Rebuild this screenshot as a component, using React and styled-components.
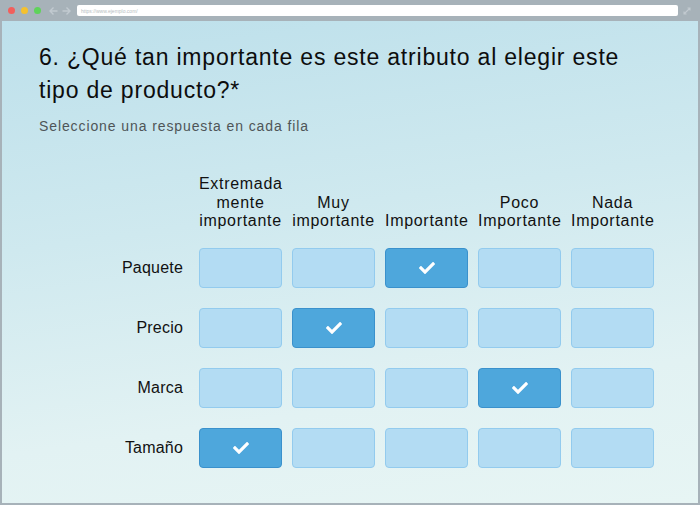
import React from "react";
import styled, { createGlobalStyle } from "styled-components";
import { FaCheck } from "react-icons/fa";

const Global = createGlobalStyle`
  html, body { margin: 0; padding: 0; }
  body { width: 700px; height: 505px; overflow: hidden; font-family: "Liberation Sans", Arial, sans-serif; }
`;

const Frame = styled.div`
  width: 700px;
  height: 505px;
  box-sizing: border-box;
  background: #a7b2b9;
  padding: 0 2px 2px 2px;
  display: flex;
  flex-direction: column;
`;

const Toolbar = styled.div`
  height: 21px;
  display: flex;
  align-items: center;
  padding: 0 0 0 6px;
  flex-shrink: 0;
`;

const Dot = styled.span`
  width: 7px;
  height: 7px;
  border-radius: 50%;
  background: ${(p) => p.$c};
  margin-right: 6px;
`;

const Arrow = styled.span`
  width: 13px;
  display: flex;
  justify-content: center;
  color: #c2cad0;
  svg { display: block; }
`;

const Url = styled.div`
  margin-left: 4px;
  width: 601px;
  height: 11px;
  background: #fff;
  border-radius: 2px;
  font-size: 5px;
  color: #b8bec2;
  display: flex;
  align-items: center;
  padding-left: 4px;
  box-sizing: border-box;
`;

const Expand = styled.span`
  margin-left: 5px;
  color: #c2cad0;
  display: flex;
`;

const Page = styled.div`
  flex: 1;
  background: linear-gradient(172deg, #bde0eb 0%, #cfe9ef 40%, #e2f2f3 75%, #e7f5f4 100%);
  padding: 20px 37px 0 37px;
  box-sizing: border-box;
`;

const Title = styled.h1`
  margin: 0;
  max-width: 610px;
  font-size: 23px;
  line-height: 33px;
  letter-spacing: 0.8px;
  font-weight: normal;
  color: #0d0d0d;
`;

const Subtitle = styled.p`
  margin: 10px 0 0 0;
  font-size: 14px;
  line-height: 18px;
  letter-spacing: 0.9px;
  color: #4f5558;
`;

const Matrix = styled.div`
  margin-top: 40px;
  display: grid;
  grid-template-columns: 150px repeat(5, 83px);
  column-gap: 10px;
  row-gap: 20px;
`;

const Head = styled.div`
  font-size: 16px;
  line-height: 18.5px;
  letter-spacing: 0.7px;
  color: #111;
  text-align: center;
  align-self: end;
  white-space: nowrap;
  margin-bottom: -2.5px;
`;

const Label = styled.div`
  font-size: 16px;
  letter-spacing: 0.2px;
  color: #111;
  text-align: right;
  padding-right: 6px;
  align-self: center;
`;

const Cell = styled.div`
  height: 40px;
  box-sizing: border-box;
  border-radius: 4px;
  border: 1px solid ${(p) => (p.$on ? "#3a91cc" : "#93cbee")};
  background: ${(p) => (p.$on ? "#4ea7dc" : "#b3dcf3")};
  display: flex;
  align-items: center;
  justify-content: center;
  color: #fff;
`;

const heads = [
  ["Extremada", "mente", "importante"],
  ["Muy", "importante"],
  ["Importante"],
  ["Poco", "Importante"],
  ["Nada", "Importante"],
];

const rows = [
  ["Paquete", 2],
  ["Precio", 1],
  ["Marca", 3],
  ["Tamaño", 0],
];

export default function App() {
  return (
    <>
      <Global />
      <Frame>
        <Toolbar>
          <Dot $c="#f25f5c" />
          <Dot $c="#f5c12e" />
          <Dot $c="#5fd35a" />
          <Arrow>
            <svg width="9" height="8" viewBox="0 0 9 8"><path d="M4.5 0.5 L1 4 L4.5 7.5 M1 4 H8.5" fill="none" stroke="currentColor" strokeWidth="1.4" /></svg>
          </Arrow>
          <Arrow>
            <svg width="9" height="8" viewBox="0 0 9 8"><path d="M4.5 0.5 L8 4 L4.5 7.5 M8 4 H0.5" fill="none" stroke="currentColor" strokeWidth="1.4" /></svg>
          </Arrow>
          <Url>https://www.ejemplo.com/</Url>
          <Expand>
            <svg width="8" height="8" viewBox="0 0 8 8"><path d="M1 7 L7 1 M4.5 1 H7 V3.5 M1 4.5 V7 H3.5" fill="none" stroke="currentColor" strokeWidth="1.1" /></svg>
          </Expand>
        </Toolbar>
        <Page>
          <Title>6. ¿Qué tan importante es este atributo al elegir este tipo de producto?*</Title>
          <Subtitle>Seleccione una respuesta en cada fila</Subtitle>
          <Matrix>
            <div />
            {heads.map((h, i) => (
              <Head key={i}>
                {h.map((l, j) => (
                  <div key={j}>{l}</div>
                ))}
              </Head>
            ))}
            {rows.map(([name, sel]) => (
              <React.Fragment key={name}>
                <Label>{name}</Label>
                {heads.map((_, i) => (
                  <Cell key={i} $on={i === sel}>
                    {i === sel && <FaCheck size={16} />}
                  </Cell>
                ))}
              </React.Fragment>
            ))}
          </Matrix>
        </Page>
      </Frame>
    </>
  );
}
